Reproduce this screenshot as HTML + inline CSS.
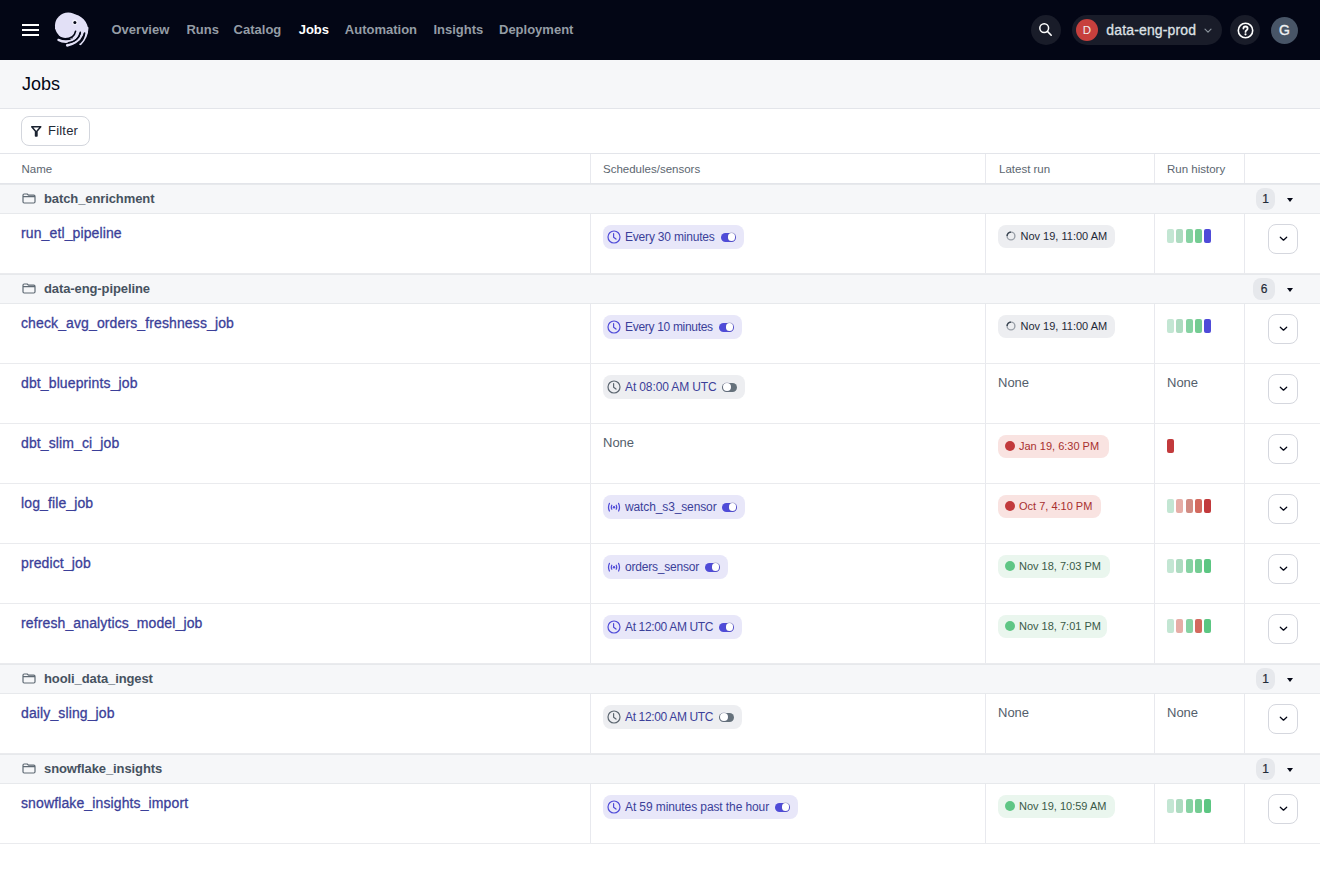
<!DOCTYPE html>
<html><head><meta charset="utf-8">
<style>
*{box-sizing:border-box;margin:0;padding:0}
html,body{width:1320px;height:880px;overflow:hidden;background:#fff;font-family:"Liberation Sans",sans-serif;}
.abs{position:absolute}
#nav{position:absolute;left:0;top:0;width:1320px;height:60px;background:#030615}
.nl{position:absolute;top:22px;font-size:13px;font-weight:bold;color:#959DA5;line-height:16px;white-space:nowrap}
.nl.on{color:#fff}
.cbtn{position:absolute;top:15px;width:30px;height:30px;border-radius:15px;background:#191C29}
#hdr{position:absolute;left:0;top:60px;width:1320px;height:49px;background:#F6F7F9;border-bottom:1px solid #E3E5EA}
#hdr span{position:absolute;left:22px;top:14px;font-size:18px;line-height:20px;color:#030615}
#fbar{position:absolute;left:0;top:109px;width:1320px;height:45px;border-bottom:1px solid #E3E5EA}
#filter{position:absolute;left:21px;top:7px;width:69px;height:30px;border:1px solid #D3D6DD;border-radius:8px;background:#fff}
#filter span{position:absolute;left:26px;top:6px;font-size:13px;letter-spacing:0.2px;line-height:16px;color:#1F2A37}
.th{position:absolute;top:154px;height:30px;border-bottom:1px solid #E3E5EA;width:1320px;left:0}
.th span{position:absolute;top:8px;font-size:11.5px;line-height:14px;color:#5C6670}
.vd{position:absolute;width:1px;background:#E8E9EE}
.grp{position:absolute;left:0;width:1320px;height:30px;background:#F6F7F9;box-shadow:inset 0 1px 0 #E7E9EC, inset 0 -1px 0 #E7E9EC}
.grp .gn{position:absolute;left:44px;top:7px;font-size:13px;font-weight:bold;letter-spacing:-0.1px;line-height:16px;color:#46525F}
.grp .fold{position:absolute;left:22px;top:9px}
.grp .cnt{position:absolute;right:44.8px;top:3.5px;width:19px;height:22.5px;border-radius:8px;background:#E6E8EC;font-size:12px;line-height:22px;text-align:center;color:#1F2A37;-webkit-text-stroke:0.2px #1F2A37}
.grp .car{position:absolute;left:1287px;top:14px;width:0;height:0;border-left:3.5px solid transparent;border-right:3.5px solid transparent;border-top:4px solid #030615}
.row{position:absolute;left:0;width:1320px;height:60px;box-shadow:inset 0 -1px 0 #EAEBEE}
.jn{position:absolute;left:21px;top:11px;font-size:14px;line-height:16px;letter-spacing:0.12px;color:#3B3F99;white-space:nowrap;-webkit-text-stroke:0.3px #3B3F99}
.pill{position:absolute;left:603px;top:11px;height:24px;border-radius:8px;background:#E8E7F9;white-space:nowrap}
.pill.off{background:#EDEEF1}
.pill .txt{position:absolute;left:22px;top:5px;font-size:12px;letter-spacing:-0.2px;line-height:14px;color:#3B3F99}
.tog{position:absolute;top:7.5px;width:15px;height:9px;border-radius:4.5px;background:#4F4BD8}
.tog::after{content:"";position:absolute;right:0.6px;top:0.6px;width:7.8px;height:7.8px;border-radius:4px;background:#fff;box-shadow:0 0 0 0.4px rgba(90,90,140,.45)}
.tog.off{background:#65717B}
.tog.off::after{right:auto;left:1px}
.none{position:absolute;top:11px;font-size:13px;line-height:16px;color:#535E6B}
.lr{position:absolute;left:998px;top:10.5px;height:23px;border-radius:8px;background:#EDEEF1;white-space:nowrap}
.lr .txt{position:absolute;left:22.5px;top:4px;font-size:11px;line-height:14px;color:#1F2937}
.lr.fail{background:#F9E3E1}
.lr.fail .txt,.lr.ok .txt{left:21px}
.lr.fail .txt{color:#A8302F}
.lr.ok{background:#EAF6EE}
.lr.ok .txt{color:#3A5A48}
.dot{position:absolute;left:7px;top:6.8px;width:9.5px;height:9.5px;border-radius:5px}
.bars{position:absolute;left:1167px;top:15px;height:14px}
.bar{position:absolute;top:0;width:7px;height:14px;border-radius:2px}
.dd{position:absolute;left:1267.5px;top:9.5px;width:30.5px;height:30px;border:1px solid #D5D7DE;border-radius:8px;background:#fff}
.dd svg{position:absolute;left:10.2px;top:11px}
</style></head><body>
<div id="nav">
  <svg class="abs" style="left:22px;top:23px" width="18" height="14" viewBox="0 0 18 14"><rect x="0" y="1" width="17" height="2" fill="#fff"/><rect x="0" y="6" width="17" height="2" fill="#fff"/><rect x="0" y="11" width="17" height="2" fill="#fff"/></svg>
  <svg class="abs" style="left:50px;top:8px" width="45" height="42" viewBox="0 0 45 42">
    <g fill="#E2E0F6" stroke="none">
    <circle cx="18.2" cy="17.8" r="13.25"/>
    <path d="M4.9 21.3 A16.6 16.6 0 0 1 38.05 23 L37.4 25.4 L34.6 25.6 L30.3 24.8 L25.6 23.6 L18 21.3 Z"/>
    </g>
    <g stroke="#E2E0F6" stroke-width="2.6" fill="none" stroke-linecap="round">
    <path d="M8.6 31.9 C12.5 34 19 34.6 23.4 31.5 C26.5 29.2 28.6 25.5 29.5 21"/>
    <path d="M17.2 37.4 C22 36.6 29 33.4 32 26.5 L33.3 20"/>
    <path d="M30.4 35.8 C33.6 32.6 36.9 28 37.2 20"/>
    </g>
    <g stroke="#030615" stroke-width="1.6" fill="none" stroke-linecap="round">
    <path d="M25.6 23.2 C24.6 28.2 20.4 30.9 15.2 30.9 C11 30.9 8 29.6 5 27.5"/>
    <path d="M30.3 24.3 C29.4 29.8 25 33.6 18.5 34.8"/>
    <path d="M34.6 25.1 C34.1 29.2 32.4 32.5 29.7 35"/>
    </g>
    <circle cx="24.8" cy="14.2" r="2.6" fill="#F6F5FD"/>
    <circle cx="24.9" cy="14.5" r="1.5" fill="#030615"/>
  </svg>
  <span class="nl" style="left:111.5px">Overview</span>
  <span class="nl" style="left:186.4px">Runs</span>
  <span class="nl" style="left:233.6px">Catalog</span>
  <span class="nl on" style="left:298.7px">Jobs</span>
  <span class="nl" style="left:344.8px">Automation</span>
  <span class="nl" style="left:433.4px">Insights</span>
  <span class="nl" style="left:499px">Deployment</span>
  <div class="cbtn" style="left:1031px"><svg class="abs" style="left:7px;top:7px" width="16" height="16" viewBox="0 0 16 16"><circle cx="6.2" cy="6.1" r="4.4" stroke="#fff" stroke-width="1.5" fill="none"/><path d="M9.4 9.4 L13.2 13.2" stroke="#fff" stroke-width="1.6" stroke-linecap="round"/></svg></div>
  <div class="abs" style="left:1072px;top:15px;width:150px;height:30px;border-radius:15px;background:#191C29"></div>
  <div class="abs" style="left:1076px;top:19px;width:22px;height:22px;border-radius:11px;background:#C7403D;color:#F0F0F0;font-size:11.5px;line-height:22px;text-align:center">D</div>
  <span class="abs" style="left:1106.3px;top:22px;font-size:14px;line-height:16px;letter-spacing:0.15px;color:#DEE1E5;-webkit-text-stroke:0.3px #DEE1E5">data-eng-prod</span><svg class="abs" style="left:1204px;top:27.5px" width="8" height="6" viewBox="0 0 8 6"><path d="M1 1.2 L4 4.2 L7 1.2" stroke="#8A929B" stroke-width="1.2" fill="none" stroke-linecap="round" stroke-linejoin="round"/></svg>
  <div class="cbtn" style="left:1230px"><svg class="abs" style="left:6.5px;top:6.5px" width="17" height="17" viewBox="0 0 17 17"><circle cx="8.5" cy="8.5" r="7.2" stroke="#fff" stroke-width="1.6" fill="none"/><path d="M6.4 6.6 Q6.4 4.5 8.5 4.5 Q10.6 4.5 10.6 6.4 Q10.6 7.5 9.5 8.2 Q8.5 8.8 8.5 9.9" stroke="#fff" stroke-width="1.8" fill="none" stroke-linecap="round"/><circle cx="8.5" cy="12.3" r="1.1" fill="#fff"/></svg></div>
  <div class="abs" style="left:1271px;top:17px;width:27px;height:27px;border-radius:14px;background:#485567;color:#EEF0F2;font-size:14px;line-height:27px;text-align:center;-webkit-text-stroke:0.35px #EEF0F2">G</div>
</div>
<div id="hdr"><span>Jobs</span></div>
<div id="fbar"><div id="filter"><svg class="abs" style="left:9.2px;top:9px" width="11" height="11" viewBox="0 0 11 11"><path d="M0.75 0.75 H9.75 L5.95 5.3 V9.9 H4.55 V5.3 Z" fill="none" stroke="#1A2230" stroke-width="1.5" stroke-linejoin="round"/></svg><span>Filter</span></div></div>
<div class="th">
  <span style="left:21.5px">Name</span>
  <span style="left:603px">Schedules/sensors</span>
  <span style="left:999px">Latest run</span>
  <span style="left:1167px">Run history</span>
</div>
<div id="tbl"><div class="vd" style="left:590px;top:154px;height:29px"></div>
<div class="vd" style="left:985px;top:154px;height:29px"></div>
<div class="vd" style="left:1154px;top:154px;height:29px"></div>
<div class="vd" style="left:1244px;top:154px;height:29px"></div>
<div class="grp" style="top:184px"><svg class="fold" width="14" height="11" viewBox="0 0 14 11"><path d="M1 2.2 Q1 1 2.2 1 H5.2 L6.4 2.2 H11.8 Q13 2.2 13 3.4 V8.8 Q13 10 11.8 10 H2.2 Q1 10 1 8.8 Z M1 3.6 H13" stroke="#5F6A74" stroke-width="1.2" fill="none" stroke-linejoin="round"/></svg><span class="gn">batch_enrichment</span><div class="cnt" style="width:19px">1</div><div class="car"></div></div>
<div class="row" style="top:214px"><div class="vd" style="left:590px;top:0;height:59px"></div><div class="vd" style="left:985px;top:0;height:59px"></div><div class="vd" style="left:1154px;top:0;height:59px"></div><div class="vd" style="left:1244px;top:0;height:59px"></div><span class="jn">run_etl_pipeline</span><div class="pill" style="width:141px"><svg class="abs" style="left:3.8px;top:4.8px" width="14" height="14" viewBox="0 0 14 14"><circle cx="7" cy="7" r="6" stroke="#4F4BD8" stroke-width="1.2" fill="none"/><path d="M6.6 3.6 V7.3 L9 9.1" stroke="#4F4BD8" stroke-width="1.2" fill="none" stroke-linecap="round" stroke-linejoin="round"/></svg><span class="txt" style="letter-spacing:-0.19px">Every 30 minutes</span><div class="tog" style="left:118px"></div></div><div class="lr" style="width:117px"><svg class="abs" style="left:7.5px;top:6.5px" width="10" height="10" viewBox="0 0 10 10"><circle cx="5" cy="5" r="3.9" stroke="#9AA0A8" stroke-width="1.4" fill="none"/><path d="M5 1.1 A3.9 3.9 0 0 0 1.1 5" stroke="#3A4552" stroke-width="1.4" fill="none"/></svg><span class="txt">Nov 19, 11:00 AM</span></div><div class="bars"><div class="bar" style="left:0.0px;background:#C3E6D3"></div><div class="bar" style="left:9.3px;background:#ADDBC0"></div><div class="bar" style="left:18.6px;background:#86D2A2"></div><div class="bar" style="left:27.9px;background:#74CC92"></div><div class="bar" style="left:37.2px;background:#4F4BD8"></div></div><div class="dd"><svg width="9" height="6" viewBox="0 0 9 6"><path d="M1.3 1.2 L4.5 4.2 L7.7 1.2" stroke="#030615" stroke-width="1.25" fill="none" stroke-linecap="round" stroke-linejoin="round"/></svg></div></div>
<div class="grp" style="top:274px"><svg class="fold" width="14" height="11" viewBox="0 0 14 11"><path d="M1 2.2 Q1 1 2.2 1 H5.2 L6.4 2.2 H11.8 Q13 2.2 13 3.4 V8.8 Q13 10 11.8 10 H2.2 Q1 10 1 8.8 Z M1 3.6 H13" stroke="#5F6A74" stroke-width="1.2" fill="none" stroke-linejoin="round"/></svg><span class="gn">data-eng-pipeline</span><div class="cnt" style="width:22px">6</div><div class="car"></div></div>
<div class="row" style="top:304px"><div class="vd" style="left:590px;top:0;height:59px"></div><div class="vd" style="left:985px;top:0;height:59px"></div><div class="vd" style="left:1154px;top:0;height:59px"></div><div class="vd" style="left:1244px;top:0;height:59px"></div><span class="jn">check_avg_orders_freshness_job</span><div class="pill" style="width:139px"><svg class="abs" style="left:3.8px;top:4.8px" width="14" height="14" viewBox="0 0 14 14"><circle cx="7" cy="7" r="6" stroke="#4F4BD8" stroke-width="1.2" fill="none"/><path d="M6.6 3.6 V7.3 L9 9.1" stroke="#4F4BD8" stroke-width="1.2" fill="none" stroke-linecap="round" stroke-linejoin="round"/></svg><span class="txt" style="letter-spacing:-0.31px">Every 10 minutes</span><div class="tog" style="left:116px"></div></div><div class="lr" style="width:117px"><svg class="abs" style="left:7.5px;top:6.5px" width="10" height="10" viewBox="0 0 10 10"><circle cx="5" cy="5" r="3.9" stroke="#9AA0A8" stroke-width="1.4" fill="none"/><path d="M5 1.1 A3.9 3.9 0 0 0 1.1 5" stroke="#3A4552" stroke-width="1.4" fill="none"/></svg><span class="txt">Nov 19, 11:00 AM</span></div><div class="bars"><div class="bar" style="left:0.0px;background:#C3E6D3"></div><div class="bar" style="left:9.3px;background:#ADDBC0"></div><div class="bar" style="left:18.6px;background:#86D2A2"></div><div class="bar" style="left:27.9px;background:#74CC92"></div><div class="bar" style="left:37.2px;background:#4F4BD8"></div></div><div class="dd"><svg width="9" height="6" viewBox="0 0 9 6"><path d="M1.3 1.2 L4.5 4.2 L7.7 1.2" stroke="#030615" stroke-width="1.25" fill="none" stroke-linecap="round" stroke-linejoin="round"/></svg></div></div>
<div class="row" style="top:364px"><div class="vd" style="left:590px;top:0;height:59px"></div><div class="vd" style="left:985px;top:0;height:59px"></div><div class="vd" style="left:1154px;top:0;height:59px"></div><div class="vd" style="left:1244px;top:0;height:59px"></div><span class="jn">dbt_blueprints_job</span><div class="pill off" style="width:142px"><svg class="abs" style="left:3.8px;top:4.8px" width="14" height="14" viewBox="0 0 14 14"><circle cx="7" cy="7" r="6" stroke="#5C6670" stroke-width="1.2" fill="none"/><path d="M6.6 3.6 V7.3 L9 9.1" stroke="#5C6670" stroke-width="1.2" fill="none" stroke-linecap="round" stroke-linejoin="round"/></svg><span class="txt" style="letter-spacing:-0.12px">At 08:00 AM UTC</span><div class="tog off" style="left:119px"></div></div><span class="none" style="left:998px">None</span><span class="none" style="left:1167px">None</span><div class="dd"><svg width="9" height="6" viewBox="0 0 9 6"><path d="M1.3 1.2 L4.5 4.2 L7.7 1.2" stroke="#030615" stroke-width="1.25" fill="none" stroke-linecap="round" stroke-linejoin="round"/></svg></div></div>
<div class="row" style="top:424px"><div class="vd" style="left:590px;top:0;height:59px"></div><div class="vd" style="left:985px;top:0;height:59px"></div><div class="vd" style="left:1154px;top:0;height:59px"></div><div class="vd" style="left:1244px;top:0;height:59px"></div><span class="jn">dbt_slim_ci_job</span><span class="none" style="left:603px">None</span><div class="lr fail" style="width:111px"><div class="dot" style="background:#C23A3C"></div><span class="txt">Jan 19, 6:30 PM</span></div><div class="bars"><div class="bar" style="left:0.0px;background:#C23A3C"></div></div><div class="dd"><svg width="9" height="6" viewBox="0 0 9 6"><path d="M1.3 1.2 L4.5 4.2 L7.7 1.2" stroke="#030615" stroke-width="1.25" fill="none" stroke-linecap="round" stroke-linejoin="round"/></svg></div></div>
<div class="row" style="top:484px"><div class="vd" style="left:590px;top:0;height:59px"></div><div class="vd" style="left:985px;top:0;height:59px"></div><div class="vd" style="left:1154px;top:0;height:59px"></div><div class="vd" style="left:1244px;top:0;height:59px"></div><span class="jn">log_file_job</span><div class="pill" style="width:142px"><svg class="abs" style="left:4px;top:7px" width="14" height="10" viewBox="0 0 14 10"><circle cx="7" cy="5.2" r="1.2" fill="#4F4BD8"/><path d="M4.8 3.2 Q3.8 5.2 4.8 7.2 M9.2 3.2 Q10.2 5.2 9.2 7.2 M2.4 1.4 Q0.6 5.2 2.4 9 M11.6 1.4 Q13.4 5.2 11.6 9" stroke="#4F4BD8" stroke-width="1.25" fill="none" stroke-linecap="round"/></svg><span class="txt" style="letter-spacing:-0.125px">watch_s3_sensor</span><div class="tog" style="left:119px"></div></div><div class="lr fail" style="width:103px"><div class="dot" style="background:#C23A3C"></div><span class="txt">Oct 7, 4:10 PM</span></div><div class="bars"><div class="bar" style="left:0.0px;background:#C3E6D3"></div><div class="bar" style="left:9.3px;background:#E6ADA6"></div><div class="bar" style="left:18.6px;background:#D18C83"></div><div class="bar" style="left:27.9px;background:#D36A5E"></div><div class="bar" style="left:37.2px;background:#C23A3C"></div></div><div class="dd"><svg width="9" height="6" viewBox="0 0 9 6"><path d="M1.3 1.2 L4.5 4.2 L7.7 1.2" stroke="#030615" stroke-width="1.25" fill="none" stroke-linecap="round" stroke-linejoin="round"/></svg></div></div>
<div class="row" style="top:544px"><div class="vd" style="left:590px;top:0;height:59px"></div><div class="vd" style="left:985px;top:0;height:59px"></div><div class="vd" style="left:1154px;top:0;height:59px"></div><div class="vd" style="left:1244px;top:0;height:59px"></div><span class="jn">predict_job</span><div class="pill" style="width:125px"><svg class="abs" style="left:4px;top:7px" width="14" height="10" viewBox="0 0 14 10"><circle cx="7" cy="5.2" r="1.2" fill="#4F4BD8"/><path d="M4.8 3.2 Q3.8 5.2 4.8 7.2 M9.2 3.2 Q10.2 5.2 9.2 7.2 M2.4 1.4 Q0.6 5.2 2.4 9 M11.6 1.4 Q13.4 5.2 11.6 9" stroke="#4F4BD8" stroke-width="1.25" fill="none" stroke-linecap="round"/></svg><span class="txt" style="letter-spacing:-0.21px">orders_sensor</span><div class="tog" style="left:102px"></div></div><div class="lr ok" style="width:112px"><div class="dot" style="background:#5FC685"></div><span class="txt">Nov 18, 7:03 PM</span></div><div class="bars"><div class="bar" style="left:0.0px;background:#C3E6D3"></div><div class="bar" style="left:9.3px;background:#ADDBC0"></div><div class="bar" style="left:18.6px;background:#86D2A2"></div><div class="bar" style="left:27.9px;background:#74CC92"></div><div class="bar" style="left:37.2px;background:#5CC682"></div></div><div class="dd"><svg width="9" height="6" viewBox="0 0 9 6"><path d="M1.3 1.2 L4.5 4.2 L7.7 1.2" stroke="#030615" stroke-width="1.25" fill="none" stroke-linecap="round" stroke-linejoin="round"/></svg></div></div>
<div class="row" style="top:604px"><div class="vd" style="left:590px;top:0;height:59px"></div><div class="vd" style="left:985px;top:0;height:59px"></div><div class="vd" style="left:1154px;top:0;height:59px"></div><div class="vd" style="left:1244px;top:0;height:59px"></div><span class="jn">refresh_analytics_model_job</span><div class="pill" style="width:139px"><svg class="abs" style="left:3.8px;top:4.8px" width="14" height="14" viewBox="0 0 14 14"><circle cx="7" cy="7" r="6" stroke="#4F4BD8" stroke-width="1.2" fill="none"/><path d="M6.6 3.6 V7.3 L9 9.1" stroke="#4F4BD8" stroke-width="1.2" fill="none" stroke-linecap="round" stroke-linejoin="round"/></svg><span class="txt" style="letter-spacing:-0.35px">At 12:00 AM UTC</span><div class="tog" style="left:116px"></div></div><div class="lr ok" style="width:109px"><div class="dot" style="background:#5FC685"></div><span class="txt">Nov 18, 7:01 PM</span></div><div class="bars"><div class="bar" style="left:0.0px;background:#C3E6D3"></div><div class="bar" style="left:9.3px;background:#E6ADA6"></div><div class="bar" style="left:18.6px;background:#86D2A2"></div><div class="bar" style="left:27.9px;background:#D36A5E"></div><div class="bar" style="left:37.2px;background:#5CC682"></div></div><div class="dd"><svg width="9" height="6" viewBox="0 0 9 6"><path d="M1.3 1.2 L4.5 4.2 L7.7 1.2" stroke="#030615" stroke-width="1.25" fill="none" stroke-linecap="round" stroke-linejoin="round"/></svg></div></div>
<div class="grp" style="top:664px"><svg class="fold" width="14" height="11" viewBox="0 0 14 11"><path d="M1 2.2 Q1 1 2.2 1 H5.2 L6.4 2.2 H11.8 Q13 2.2 13 3.4 V8.8 Q13 10 11.8 10 H2.2 Q1 10 1 8.8 Z M1 3.6 H13" stroke="#5F6A74" stroke-width="1.2" fill="none" stroke-linejoin="round"/></svg><span class="gn">hooli_data_ingest</span><div class="cnt" style="width:19px">1</div><div class="car"></div></div>
<div class="row" style="top:694px"><div class="vd" style="left:590px;top:0;height:59px"></div><div class="vd" style="left:985px;top:0;height:59px"></div><div class="vd" style="left:1154px;top:0;height:59px"></div><div class="vd" style="left:1244px;top:0;height:59px"></div><span class="jn">daily_sling_job</span><div class="pill off" style="width:139px"><svg class="abs" style="left:3.8px;top:4.8px" width="14" height="14" viewBox="0 0 14 14"><circle cx="7" cy="7" r="6" stroke="#5C6670" stroke-width="1.2" fill="none"/><path d="M6.6 3.6 V7.3 L9 9.1" stroke="#5C6670" stroke-width="1.2" fill="none" stroke-linecap="round" stroke-linejoin="round"/></svg><span class="txt" style="letter-spacing:-0.35px">At 12:00 AM UTC</span><div class="tog off" style="left:116px"></div></div><span class="none" style="left:998px">None</span><span class="none" style="left:1167px">None</span><div class="dd"><svg width="9" height="6" viewBox="0 0 9 6"><path d="M1.3 1.2 L4.5 4.2 L7.7 1.2" stroke="#030615" stroke-width="1.25" fill="none" stroke-linecap="round" stroke-linejoin="round"/></svg></div></div>
<div class="grp" style="top:754px"><svg class="fold" width="14" height="11" viewBox="0 0 14 11"><path d="M1 2.2 Q1 1 2.2 1 H5.2 L6.4 2.2 H11.8 Q13 2.2 13 3.4 V8.8 Q13 10 11.8 10 H2.2 Q1 10 1 8.8 Z M1 3.6 H13" stroke="#5F6A74" stroke-width="1.2" fill="none" stroke-linejoin="round"/></svg><span class="gn">snowflake_insights</span><div class="cnt" style="width:19px">1</div><div class="car"></div></div>
<div class="row" style="top:784px"><div class="vd" style="left:590px;top:0;height:59px"></div><div class="vd" style="left:985px;top:0;height:59px"></div><div class="vd" style="left:1154px;top:0;height:59px"></div><div class="vd" style="left:1244px;top:0;height:59px"></div><span class="jn">snowflake_insights_import</span><div class="pill" style="width:195px"><svg class="abs" style="left:3.8px;top:4.8px" width="14" height="14" viewBox="0 0 14 14"><circle cx="7" cy="7" r="6" stroke="#4F4BD8" stroke-width="1.2" fill="none"/><path d="M6.6 3.6 V7.3 L9 9.1" stroke="#4F4BD8" stroke-width="1.2" fill="none" stroke-linecap="round" stroke-linejoin="round"/></svg><span class="txt" style="letter-spacing:-0.1px">At 59 minutes past the hour</span><div class="tog" style="left:172px"></div></div><div class="lr ok" style="width:117px"><div class="dot" style="background:#5FC685"></div><span class="txt">Nov 19, 10:59 AM</span></div><div class="bars"><div class="bar" style="left:0.0px;background:#C3E6D3"></div><div class="bar" style="left:9.3px;background:#ADDBC0"></div><div class="bar" style="left:18.6px;background:#86D2A2"></div><div class="bar" style="left:27.9px;background:#74CC92"></div><div class="bar" style="left:37.2px;background:#5CC682"></div></div><div class="dd"><svg width="9" height="6" viewBox="0 0 9 6"><path d="M1.3 1.2 L4.5 4.2 L7.7 1.2" stroke="#030615" stroke-width="1.25" fill="none" stroke-linecap="round" stroke-linejoin="round"/></svg></div></div></div><!--/tbl-->
</body></html>
